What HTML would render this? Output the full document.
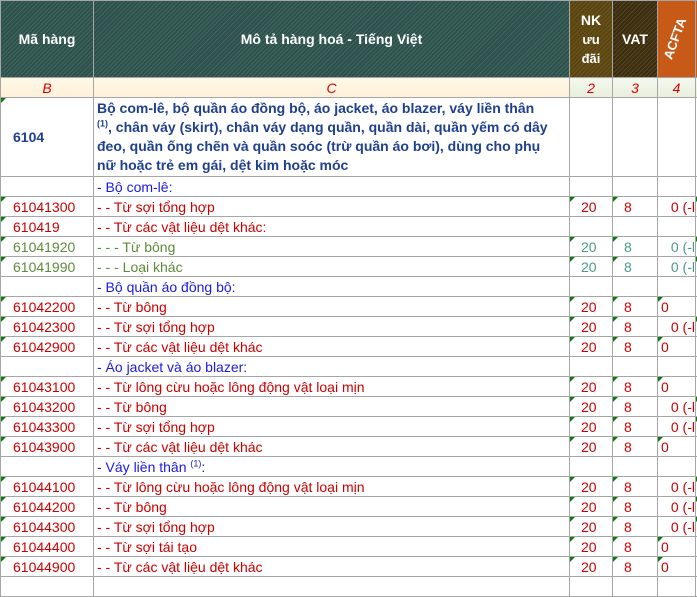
<!DOCTYPE html>
<html><head><meta charset="utf-8"><style>
body{margin:0;width:697px;height:579px;overflow:hidden;background:#fff;font-family:"Liberation Sans",Arial,sans-serif;}
table{border-collapse:collapse;table-layout:fixed;position:absolute;left:0;top:0;width:705px;}
td{border:1px solid #a6a6a6;padding:0;font-size:14px;height:19px;white-space:nowrap;overflow:hidden;position:relative;}
.h{height:76px;color:#fff;font-weight:bold;font-size:14px;text-align:center;
background:repeating-linear-gradient(135deg,#2f4f4f 0 2px,#3e6a5a 2px 3px);}
.nk{background:repeating-linear-gradient(135deg,#5a4510 0 2px,#6b5420 2px 3px);line-height:19px}
.vat{background:repeating-linear-gradient(135deg,#3a2c12 0 2px,#55441c 2px 3px);}
.ac{background:#c85a18;}
.bl td{height:19px;background:linear-gradient(#fff8e6,#fdf0d8);color:#d00;font-style:italic;text-align:center;font-size:14px}
.bl td.g{background:linear-gradient(#f4f8ee,#e6eedc)}
.r td{color:#cc0000}
.o td{color:#5f8a3a}
.o td.n{color:#4a9a8a}
.s td{color:#1a1ae6}
.c{padding-left:12px}
.d{padding-left:3px}
.n{text-align:left;padding-left:11px}
sup{font-size:9px;line-height:0}
.t::before{content:"";position:absolute;left:0;top:0;border-top:5px solid #0a7a0a;border-right:5px solid transparent;}
</style></head><body>
<table>
<colgroup><col style="width:93px"><col style="width:476px"><col style="width:43px"><col style="width:45px"><col style="width:38px"><col style="width:10px"></colgroup>
<tr><td class="h">Mã hàng</td><td class="h">Mô tả hàng hoá - Tiếng Việt</td><td class="h nk">NK<br><span style="font-size:13px">ưu<br>đãi</span></td><td class="h vat">VAT</td><td class="h ac"><div style="transform:rotate(-70deg);font-size:13px;margin-left:-4px">ACFTA</div></td><td class="h ac"></td></tr>
<tr class="bl"><td>B</td><td>C</td><td class="g">2</td><td class="g">3</td><td class="g">4</td><td class="g"></td></tr>
<tr><td class="t" style="height:77px;color:#1f3f8f;font-weight:bold;padding-left:12px">6104</td><td style="height:77px;color:#1f3f8f;font-weight:bold;padding:1px 2px 0 3px;line-height:19px;vertical-align:top">Bộ com-lê, bộ quần áo đồng bộ, áo jacket, áo blazer, váy liền thân<br><sup>(1)</sup>, chân váy (skirt), chân váy dạng quần, quần dài, quần yếm có dây<br>đeo, quần ống chẽn và quần soóc (trừ quần áo bơi), dùng cho phụ<br>nữ hoặc trẻ em gái, dệt kim hoặc móc</td><td></td><td></td><td></td><td></td></tr>
<tr class="s"><td></td><td class="d">- Bộ com-lê:</td><td></td><td></td><td></td><td></td></tr>
<tr class="r"><td class="c t">61041300</td><td class="d">- - Từ sợi tổng hợp</td><td class="n t">20</td><td class="n t">8</td><td style="text-align:right">0 (-l</td><td class="t"></td></tr>
<tr class="r"><td class="c t">610419</td><td class="d">- - Từ các vật liệu dệt khác:</td><td></td><td></td><td></td><td></td></tr>
<tr class="o"><td class="c t">61041920</td><td class="d">- - - Từ bông</td><td class="n t">20</td><td class="n t">8</td><td class="n" style="text-align:right">0 (-l</td><td class="t"></td></tr>
<tr class="o"><td class="c t">61041990</td><td class="d">- - - Loại khác</td><td class="n t">20</td><td class="n t">8</td><td class="n" style="text-align:right">0 (-l</td><td class="t"></td></tr>
<tr class="s"><td></td><td class="d">- Bộ quần áo đồng bộ:</td><td></td><td></td><td></td><td></td></tr>
<tr class="r"><td class="c t">61042200</td><td class="d">- - Từ bông</td><td class="n t">20</td><td class="n t">8</td><td class="d t">0</td><td></td></tr>
<tr class="r"><td class="c t">61042300</td><td class="d">- - Từ sợi tổng hợp</td><td class="n t">20</td><td class="n t">8</td><td style="text-align:right">0 (-l</td><td class="t"></td></tr>
<tr class="r"><td class="c t">61042900</td><td class="d">- - Từ các vật liệu dệt khác</td><td class="n t">20</td><td class="n t">8</td><td class="d t">0</td><td></td></tr>
<tr class="s"><td></td><td class="d">- Áo jacket và áo blazer:</td><td></td><td></td><td></td><td></td></tr>
<tr class="r"><td class="c t">61043100</td><td class="d">- - Từ lông cừu hoặc lông động vật loại mịn</td><td class="n t">20</td><td class="n t">8</td><td class="d t">0</td><td></td></tr>
<tr class="r"><td class="c t">61043200</td><td class="d">- - Từ bông</td><td class="n t">20</td><td class="n t">8</td><td style="text-align:right">0 (-l</td><td class="t"></td></tr>
<tr class="r"><td class="c t">61043300</td><td class="d">- - Từ sợi tổng hợp</td><td class="n t">20</td><td class="n t">8</td><td style="text-align:right">0 (-l</td><td class="t"></td></tr>
<tr class="r"><td class="c t">61043900</td><td class="d">- - Từ các vật liệu dệt khác</td><td class="n t">20</td><td class="n t">8</td><td class="d t">0</td><td></td></tr>
<tr class="s"><td></td><td class="d">- Váy liền thân <sup>(1)</sup>:</td><td></td><td></td><td></td><td></td></tr>
<tr class="r"><td class="c t">61044100</td><td class="d">- - Từ lông cừu hoặc lông động vật loại mịn</td><td class="n t">20</td><td class="n t">8</td><td style="text-align:right">0 (-l</td><td class="t"></td></tr>
<tr class="r"><td class="c t">61044200</td><td class="d">- - Từ bông</td><td class="n t">20</td><td class="n t">8</td><td style="text-align:right">0 (-l</td><td class="t"></td></tr>
<tr class="r"><td class="c t">61044300</td><td class="d">- - Từ sợi tổng hợp</td><td class="n t">20</td><td class="n t">8</td><td style="text-align:right">0 (-l</td><td class="t"></td></tr>
<tr class="r"><td class="c t">61044400</td><td class="d">- - Từ sợi tái tạo</td><td class="n t">20</td><td class="n t">8</td><td class="d t">0</td><td></td></tr>
<tr class="r"><td class="c t">61044900</td><td class="d">- - Từ các vật liệu dệt khác</td><td class="n t">20</td><td class="n t">8</td><td class="d t">0</td><td></td></tr>
<tr><td></td><td></td><td></td><td></td><td></td><td></td></tr>
</table>
</body></html>
